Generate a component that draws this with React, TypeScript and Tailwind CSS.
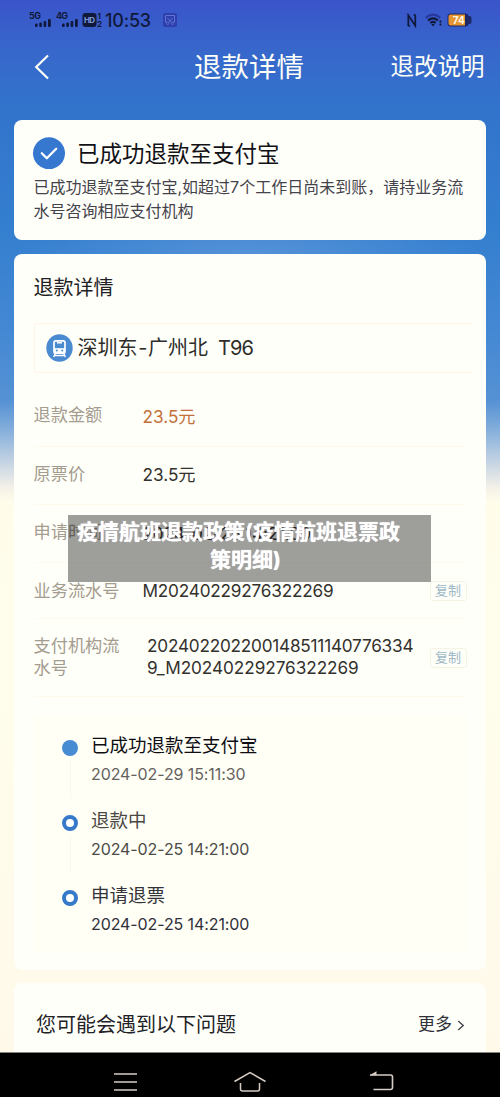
import clsx from "clsx";

const steps = [
  {
    title: "已成功退款至支付宝",
    time: "2024-02-29 15:11:30",
    done: true,
    titleColor: "text-[#0d0d12]",
    timeColor: "text-[#65625e]",
  },
  {
    title: "退款中",
    time: "2024-02-25 14:21:00",
    done: false,
    titleColor: "text-[#4a4844]",
    timeColor: "text-[#4c4b48]",
  },
  {
    title: "申请退票",
    time: "2024-02-25 14:21:00",
    done: false,
    titleColor: "text-[#33333a]",
    timeColor: "text-[#2f2f3a]",
  },
];

function Signal({ label }: { label: string }) {
  return (
    <svg width="24" height="18" viewBox="0 0 24 18" fill="#10193c">
      <text x="0" y="8" fontSize="9" fontWeight="700" textLength="12">
        {label}
      </text>
      <rect x="6" y="12.5" width="2.6" height="3.5" rx="1" />
      <rect x="10.3" y="11.5" width="2.6" height="4.5" rx="1" />
      <rect x="14.6" y="10" width="2.6" height="6" rx="1" />
      <rect x="19" y="8" width="2.8" height="8" rx="1" />
    </svg>
  );
}

function StatusBar() {
  return (
    <div className="flex h-10 items-center pl-[29px] pr-[28px] text-[#10193c]">
      <Signal label="5G" />
      <div className="ml-[2.5px] flex">
        <Signal label="4G" />
      </div>
      <svg className="ml-[2px]" width="21" height="18" viewBox="0 0 21 18">
        <rect x="0.5" y="2" width="14" height="14" rx="3" fill="#10193c" />
        <text x="2" y="12" fontSize="8" fontWeight="700" fill="#7c9ad8" textLength="11">
          HD
        </text>
        <text x="15.5" y="8" fontSize="8" fontWeight="700" fill="#10193c">
          1
        </text>
        <text x="15" y="16.3" fontSize="8" fontWeight="700" fill="#10193c">
          2
        </text>
      </svg>
      <span className="ml-[2.5px] w-[46px] whitespace-nowrap pt-[2px] text-[18px] font-medium leading-none tracking-[-0.2px]">
        10:53
      </span>
      <svg className="ml-[12px]" width="14" height="14" viewBox="0 0 14 14" fill="none">
        <rect width="14" height="14" rx="2.5" fill="#2f3fae" />
        <path d="M4 9H2.5V2.5h9V9H10M4.5 5l4.2 4.7M9.5 5 5.3 9.7" stroke="#5d74d2" />
        <circle cx="4.7" cy="10.4" r="1.1" stroke="#5d74d2" strokeWidth="0.8" />
        <circle cx="9.3" cy="10.4" r="1.1" stroke="#5d74d2" strokeWidth="0.8" />
      </svg>
      <div className="ml-auto flex items-center">
        <svg width="10" height="15" viewBox="0 0 10 15" fill="none">
          <path d="M3 13.3 1.3 12.4V2.2l7 10.6V2.4L6.8 1.4" stroke="#10193c" strokeWidth="1.7" />
        </svg>
        <svg className="ml-[8px]" width="17" height="14" viewBox="0 0 17 14" fill="none">
          <path d="M.8 4.8Q8 -1.5 15.2 4.8" stroke="#2638a0" strokeWidth="2.2" />
          <path d="M3 7.5Q8 3.2 13 7.5" stroke="#10193c" strokeWidth="2.1" />
          <path d="M5.2 10Q8 7.7 10.8 10" stroke="#10193c" strokeWidth="2" />
          <path d="m6.2 11.4 1.8 1.8 1.8-1.8Q8 10.2 6.2 11.4Z" fill="#10193c" />
          <path d="M15.4 7.5v5" stroke="#10193c" strokeWidth="1.8" strokeDasharray="2 1" />
        </svg>
        <svg className="ml-[5px]" width="25" height="14" viewBox="0 0 25 14">
          <rect x="0.5" y="0.5" width="21" height="13" rx="3" fill="#1c2868" />
          <rect x="20" y="3" width="4.5" height="8" rx="2" fill="#1c2868" />
          <path d="M3.5 1.5H18v11H3.5a2 2 0 0 1-2-2v-7a2 2 0 0 1 2-2Z" fill="#e7962f" />
          <text x="5.8" y="10.7" fontSize="10" fontWeight="700" fill="#fff8e8" textLength="12">
            74
          </text>
        </svg>
      </div>
    </div>
  );
}

function Header() {
  return (
    <div className="grid h-[54px] grid-cols-[194px_1fr_auto] items-center pr-[15.5px] text-[#fdfff8]">
      <svg className="ml-[34px]" width="16" height="26" viewBox="0 0 16 26" fill="none">
        <path d="M14 1.5 2.2 13 14 24.5" stroke="currentColor" strokeWidth="2.2" />
      </svg>
      <h1 className="whitespace-nowrap pt-[2px] text-[27.5px] leading-none">退款详情</h1>
      <span className="whitespace-nowrap text-[23.5px] leading-none">退改说明</span>
    </div>
  );
}

function Notice() {
  return (
    <section className="mx-[14px] mt-[25.5px] h-[120.5px] rounded-[8px] bg-[#fffffa] px-[19.5px] pt-[17.5px]">
      <div className="flex items-center">
        <svg className="-ml-[0.5px]" width="32" height="32" viewBox="0 0 32 32" fill="none">
          <circle cx="16" cy="16.3" r="16" fill="#3678cf" />
          <path
            d="m8.8 16.2 5 5 9.4-9.4"
            stroke="#fff"
            strokeWidth="2.3"
            strokeLinecap="round"
            strokeLinejoin="round"
          />
        </svg>
        <h2 className="ml-[12px] whitespace-nowrap pt-[2px] text-[22.5px] leading-[30px] text-[#111116]">
          已成功退款至支付宝
        </h2>
      </div>
      <p className="mt-[7px] whitespace-nowrap text-[16px] leading-[23.5px] text-[#44434b]">
        已成功退款至支付宝,如超过7个工作日尚未到账，请持业务流
        <br />
        水号咨询相应支付机构
      </p>
    </section>
  );
}

function CopyButton() {
  return (
    <button
      type="button"
      className="ml-auto flex h-5 w-[37px] items-center justify-center rounded-[3px] border border-[#f6f2e4] text-[13px] leading-none text-[#9db8c6]"
    >
      复制
    </button>
  );
}

function Route() {
  return (
    <div className="mt-[17.5px] flex h-[50px] w-[438px] items-center rounded-l-[4px] border-y border-l border-[#fff4e6] pl-[11px]">
      <svg width="27" height="28" viewBox="0 0 27 28" fill="none">
        <ellipse cx="13.5" cy="14" rx="13.2" ry="13.8" fill="#4a8ad0" />
        <rect x="8" y="6.8" width="11" height="12.4" rx="1.8" stroke="#fff" strokeWidth="1.7" />
        <path d="M8 14.2h11v5H8Z" fill="#fff" />
        <path d="M11 8.8h5M9.3 19.5l-1.6 3.5M17.7 19.5l1.6 3.5M8.8 21.6h9.4" stroke="#fff" strokeWidth="1.5" />
        <circle cx="10.8" cy="16.6" r="1" fill="#4a8ad0" />
        <circle cx="16.2" cy="16.6" r="1" fill="#4a8ad0" />
      </svg>
      <span className="ml-[5px] whitespace-nowrap text-[20px] leading-none text-[#2e2d2a]">
        深圳东<span className="mx-[0.7px]">-</span>广州北
      </span>
      <span className="ml-[10px] text-[20px] leading-none tracking-[-0.9px] text-[#2e2d2a]">T96</span>
    </div>
  );
}

function Details() {
  const row = "flex items-center border-b border-[#fffaec]";
  const label = "w-[109px] whitespace-nowrap text-[17.2px] leading-none text-[#a49c8e]";
  const value = "whitespace-nowrap text-[17.2px] leading-none tracking-[-0.2px] text-[#33312d]";

  return (
    <section className="mx-[14px] mt-[14px] h-[716px] rounded-[8px] bg-[#fffffa] pl-[19.5px] pr-[19.5px] pt-[17.5px]">
      <h2 className="whitespace-nowrap pb-[2px] pt-px text-[20px] leading-[31px] text-[#212124]">退款详情</h2>
      <Route />
      <div className={clsx(row, "h-[74px] pt-[11px]")}>
        <span className={label}>退款金额</span>
        <span className="whitespace-nowrap pt-[3px] text-[17.2px] leading-none text-[#c4703a]">23.5元</span>
      </div>
      <div className={clsx(row, "h-[58px]")}>
        <span className={clsx(label, "pb-[3px]")}>原票价</span>
        <span className="whitespace-nowrap pb-px text-[17.2px] leading-none text-[#33312d]">23.5元</span>
      </div>
      <div className={clsx(row, "h-[58px]")}>
        <span className={clsx(label, "pb-[3px]")}>申请时间</span>
        <span className={value}>2024-02-25 14:21:00</span>
      </div>
      <div className={clsx(row, "h-[56px]")}>
        <span className={label}>业务流水号</span>
        <span className={value}>M20240229276322269</span>
        <CopyButton />
      </div>
      <div className={clsx(row, "h-[78px]")}>
        <span className="w-[113.5px] pb-px text-[17.2px] leading-[22px] text-[#a49c8e]">
          支付机构流
          <br />
          水号
        </span>
        <span className="whitespace-nowrap pb-px text-[17.2px] leading-[22px] text-[#33312d]">
          <span className="tracking-[-0.22px]">202402202200148511140776334</span>
          <br />
          <span className="tracking-[-0.06px]">9_M20240229276322269</span>
        </span>
        <CopyButton />
      </div>
      <Timeline />
    </section>
  );
}

function Timeline() {
  return (
    <div className="mt-[17.5px] h-[238px] bg-[#fffff6] pl-[28.5px] pt-[17px]">
      {steps.map((step, i) => (
        <div key={step.title} className="flex h-[75px]">
          <div className="flex w-4 flex-col items-center pt-[8px]">
            <span
              className={clsx(
                "size-4 shrink-0 rounded-full",
                step.done ? "bg-[#478bd2]" : "border-[4.5px] border-[#3579c8] bg-white"
              )}
            />
            {i < steps.length - 1 && <span className="mt-1 h-[38px] w-px bg-[#fdf6ea]" />}
          </div>
          <div className="ml-[13px] whitespace-nowrap">
            <div className={clsx("text-[18.5px] leading-[26px]", step.titleColor)}>{step.title}</div>
            <div className={clsx("mt-[4px] text-[16px] leading-[24px] tracking-[-0.1px]", step.timeColor)}>
              {step.time}
            </div>
          </div>
        </div>
      ))}
    </div>
  );
}

function Questions() {
  return (
    <section className="mx-[14px] mt-[13px] flex h-[69px] items-center rounded-t-[8px] bg-[#fffffa] pl-[22px] pr-[21px] pt-[13px]">
      <h2 className="whitespace-nowrap pt-px text-[20px] leading-none text-[#222226]">您可能会遇到以下问题</h2>
      <span className="ml-auto whitespace-nowrap text-[17px] leading-none text-[#303037]">更多</span>
      <svg className="ml-[5px] mt-[3px]" width="8" height="11" viewBox="0 0 8 11" fill="none">
        <path d="m1.2 1 5 4.5-5 4.5" stroke="#44444b" strokeWidth="1.4" />
      </svg>
    </section>
  );
}

function NavBar() {
  return (
    <nav className="flex h-[45px] items-center border-t border-[#85857d] bg-black pt-[13px] text-[#d6ccc4]">
      <svg className="ml-[113px]" width="25" height="20" viewBox="0 0 25 20" fill="none">
        <path d="M1 2h23M1 10h23M1 18h23" stroke="currentColor" strokeWidth="1.7" />
      </svg>
      <svg className="ml-[95px]" width="34" height="22" viewBox="0 0 34 22" fill="none">
        <path
          d="M1.5 10.5 17 1.5l15.5 9M7.5 12v6q0 2 2 2h15q2 0 2-2v-6"
          stroke="currentColor"
          strokeWidth="1.5"
        />
      </svg>
      <svg className="ml-[102px]" width="26" height="22" viewBox="0 0 26 22" fill="none">
        <path d="M1 4h20.5q2 0 2 2v10.5q0 2-2 2H4.5" stroke="currentColor" strokeWidth="1.6" />
        <path d="M.5 4.3 7.5.3v4Z" fill="currentColor" />
      </svg>
    </nav>
  );
}

export default function App() {
  return (
    <div className="relative h-[1097px] w-[500px] overflow-hidden bg-[radial-gradient(ellipse_230px_50px_at_250px_255px,#5592d8_0%,#5592d800_100%),linear-gradient(to_bottom,#3a54ca_0px,#3767cb_50px,#3274cc_110px,#347fcf_230px,#4488d3_330px,#5591d4_400px,#7ba9da_425px,#b9cde2_456px,#f5f1e8_488px,#fffdea_503px,#fffdec_700px,#fff9ea_1052px)] font-['Inter','Noto_Sans_CJK_SC',sans-serif]">
      <StatusBar />
      <Header />
      <Notice />
      <Details />
      <Questions />
      <NavBar />
      {/* caption banner floating over the detail rows */}
      <div className="absolute left-[68px] top-[515px] h-[66.5px] w-[363px] whitespace-nowrap bg-black/38 pt-[3px] text-[21px] font-bold leading-[28px] text-white [text-shadow:0_0_1px_#fff]">
        <div className="pl-[9px]">疫情航班退款政策(疫情航班退票政</div>
        <div className="pl-[142px]">策明细)</div>
      </div>
    </div>
  );
}
